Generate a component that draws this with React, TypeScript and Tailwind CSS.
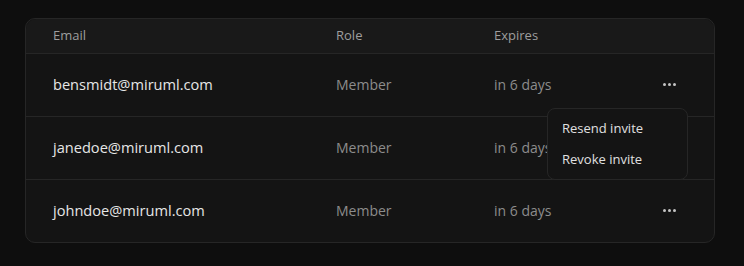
import React from 'react'

const invites = [
  { email: 'bensmidt@miruml.com', role: 'Member', expires: 'in 6 days', menu: true },
  { email: 'janedoe@miruml.com', role: 'Member', expires: 'in 6 days', open: true },
  { email: 'johndoe@miruml.com', role: 'Member', expires: 'in 6 days', menu: true },
]

const Dots = () => (
  <div className="flex items-center gap-[2px]">
    <span className="w-[3px] h-[3px] rounded-full bg-[#c4c4c4]" />
    <span className="w-[3px] h-[3px] rounded-full bg-[#c4c4c4]" />
    <span className="w-[3px] h-[3px] rounded-full bg-[#c4c4c4]" />
  </div>
)

const App = () => {
  return (
    <div className="w-[744px] h-[266px] bg-[#0e0e0e] pt-[18px] px-[25px]" style={{ fontFamily: '"Open Sans", "Noto Sans", sans-serif' }}>
      <div className="relative w-[690px] rounded-[10px] border border-[#262626] bg-[#141414]">
        {/* Header */}
        <div className="flex items-center h-[35px] bg-[#191919] rounded-t-[10px] border-b border-[#262626] text-[13px] text-[#9e9e9e]">
          <div className="pl-[27px] w-[310px]">Email</div>
          <div className="w-[158px]">Role</div>
          <div>Expires</div>
        </div>

        {invites.map((inv, i) => (
          <div
            key={inv.email}
            className={`flex items-center ${i < invites.length - 1 ? 'h-[63px] border-b border-[#262626]' : 'h-[62px]'}`}
          >
            <div className="pl-[27px] w-[310px] text-[14.6px] text-[#e6e6e6] pb-[1px]">{inv.email}</div>
            <div className="w-[158px] text-[14px] text-[#8c8c8c] pb-[1px]">{inv.role}</div>
            <div className="w-[150px] text-[14px] text-[#8c8c8c] pb-[1px]">{inv.expires}</div>
            <div className="w-[50px] flex justify-center pb-[1px]">{inv.menu && <Dots />}</div>
          </div>
        ))}

        {/* Dropdown menu */}
        <div className="absolute left-[521px] top-[89px] w-[141px] h-[72px] rounded-[8px] border border-[#262626] bg-[#141414] py-[4px] text-[13px] text-[#e0e0e0]">
          <div className="px-[14px] h-[31px] flex items-center">Resend invite</div>
          <div className="px-[14px] h-[31px] flex items-center">Revoke invite</div>
        </div>
      </div>
    </div>
  )
}

export default App
